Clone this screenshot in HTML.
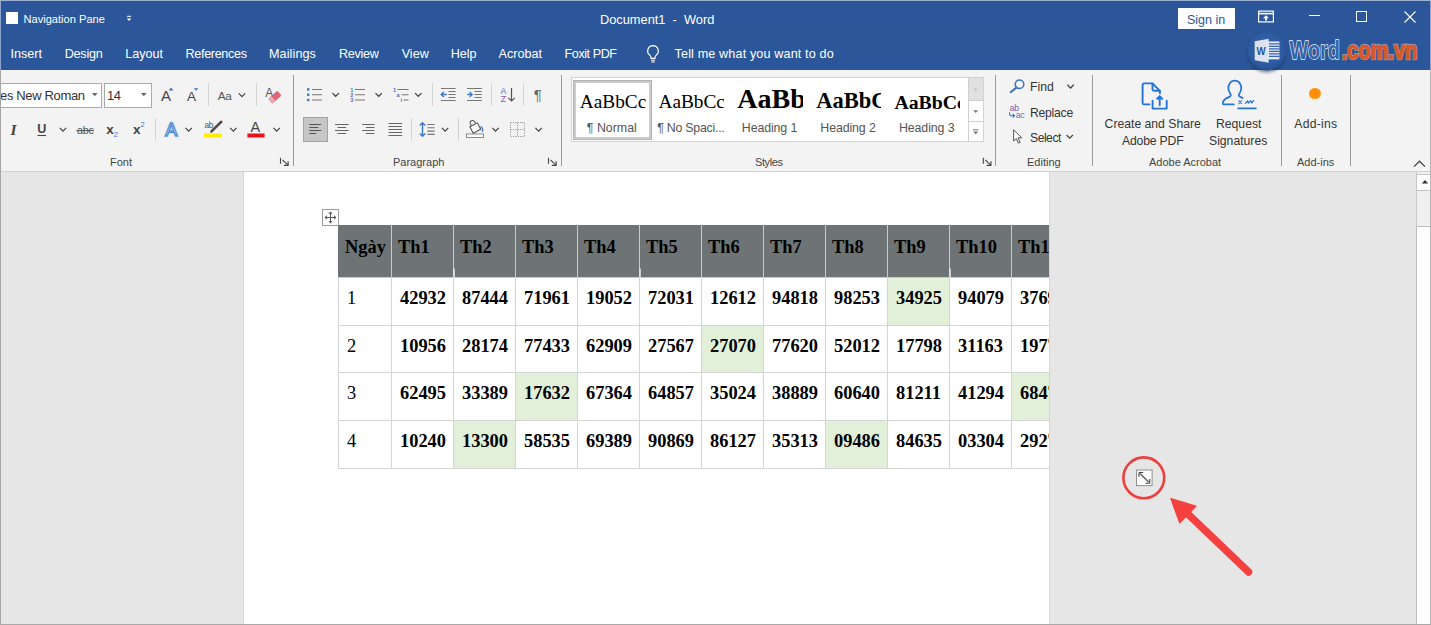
<!DOCTYPE html>
<html lang="vi">
<head>
<meta charset="utf-8">
<title>Document1 - Word</title>
<style>
*{box-sizing:border-box;margin:0;padding:0}
html,body{width:1431px;height:625px;overflow:hidden;background:#e6e6e6}
body{position:relative;font-family:"Liberation Sans",sans-serif;font-size:12px;color:#3b3b3b}
.abs{position:absolute}
.t{position:absolute;white-space:nowrap;line-height:1}
/* title bar */
#titlebar{position:absolute;left:0;top:0;width:1431px;height:70px;background:#2b579a}
#titlebar .t{color:#fff}
#titlebar .tab{top:48px;font-size:12.6px}
/* ribbon */
#ribbon{position:absolute;left:0;top:70px;width:1431px;height:102px;background:#f3f3f3;border-bottom:1px solid #d2d2d2}
.vsep{position:absolute;width:1px;background:#d4d4d4}
.gsep{position:absolute;width:1px;background:#9a9a9a;top:5px;height:91px}
.glabel{position:absolute;white-space:nowrap;line-height:1;font-size:11px;color:#444;top:87px}
.sty{height:30px;line-height:30px;overflow:hidden;white-space:nowrap;font-family:"Liberation Serif",serif;color:#000}
.stn{top:44px;font-size:12.400px;color:#555}
.rb{font-size:12.200px;color:#333}
/* doc */
#doc{position:absolute;left:0;top:172px;width:1431px;height:453px;background:#e6e6e6;overflow:hidden}
#page{position:absolute;left:243px;top:0;width:807px;height:460px;background:#fff;border-left:1px solid #d6d6d6;border-right:1px solid #d6d6d6;overflow:hidden}
/* table */
#tbl{position:absolute;left:94px;top:53px;width:736px;border-collapse:collapse;table-layout:fixed;font-family:"Liberation Serif",serif;font-size:18.4px;color:#000}
#tbl td{border:1px solid #d4d4d4;width:62px;height:48px;padding:0 0 6px 8px;vertical-align:middle;font-weight:bold;white-space:nowrap;overflow:hidden}
#tbl td:first-child{width:53px;font-weight:normal;padding-left:8px}
#tbl tr.h td{background:#6e7475;height:52px;border-color:#c9cbcb;border-top-color:#6e7475;padding:0 0 8px 6px}
#tbl tr.h td:first-child{font-weight:bold;padding-left:6px;border-left-color:#6e7475}
#tbl td.g{background:#e2efd9}
#tbl tr.r2 td{height:47px}
/* frame */
#frame{position:absolute;left:0;top:0;width:1431px;height:625px;pointer-events:none;z-index:50}
#frame i{position:absolute;display:block}
</style>
</head>
<body>
<div id="titlebar">
  <div class="abs" style="left:6px;top:12px;width:12px;height:12px;background:#fff"></div>
  <div class="t" id="navp" style="left:23.5px;top:13.5px;font-size:11.1px">Navigation Pane</div>
  <svg class="abs" style="left:125px;top:14px" width="8" height="9" viewBox="0 0 8 9"><path d="M2 2.300h4.200" stroke="#fff" stroke-width="1" fill="none"/><path d="M1.800 4.400h4.600L4.100 7z" fill="#fff"/></svg>
  <div class="t" id="ttl" style="left:600px;top:14px;font-size:12.8px">Document1&nbsp; -&nbsp; Word</div>
  <!-- tabs -->
  <div class="t tab" id="tb1" style="left:10.4px">Insert</div>
  <div class="t tab" id="tb2" style="left:64.7px;letter-spacing:-0.23px">Design</div>
  <div class="t tab" id="tb3" style="left:125.2px">Layout</div>
  <div class="t tab" id="tb4" style="left:185.6px;letter-spacing:-0.34px">References</div>
  <div class="t tab" id="tb5" style="left:269px;letter-spacing:0.1px">Mailings</div>
  <div class="t tab" id="tb6" style="left:339px;letter-spacing:-0.3px">Review</div>
  <div class="t tab" id="tb7" style="left:401.7px">View</div>
  <div class="t tab" id="tb8" style="left:450.7px">Help</div>
  <div class="t tab" id="tb9" style="left:498.5px">Acrobat</div>
  <div class="t tab" id="tb10" style="left:564.6px;letter-spacing:-0.45px">Foxit PDF</div>
  <svg class="abs" style="left:645px;top:44px" width="16" height="20" viewBox="0 0 16 20"><path d="M8 1.6a5.3 5.3 0 0 0-3.2 9.5c.8.7 1.2 1.5 1.2 2.6v.6h4v-.6c0-1.100.4-1.900 1.200-2.600A5.300 5.300 0 0 0 8 1.600z" fill="none" stroke="#fff" stroke-width="1.2"/><path d="M6 16.2h4M6.300 18h3.400" stroke="#fff" stroke-width="1.1" fill="none"/></svg>
  <div class="t tab" id="tb11" style="left:674.6px;letter-spacing:0.14px">Tell me what you want to do</div>
  <!-- sign in -->
  <div class="abs" style="left:1178px;top:8px;width:57px;height:21px;background:#fff"></div>
  <div class="t" id="sgn" style="left:1187px;top:13.500px;font-size:12.5px;color:#2b579a">Sign in</div>
  <!-- ribbon display options -->
  <svg class="abs" style="left:1258px;top:10px" width="16" height="13" viewBox="0 0 16 13"><rect x="0.6" y="1.1" width="14.800" height="10.800" fill="none" stroke="#fff" stroke-width="1.2"/><path d="M0.6 3.6h14.800" stroke="#fff" stroke-width="1.6"/><path d="M8 5.300l3 3h-2v2.200h-2v-2.200h-2z" fill="#fff"/></svg>
  <!-- min / max / close -->
  <div class="abs" style="left:1309px;top:15px;width:11px;height:1px;background:#fff"></div>
  <div class="abs" style="left:1356px;top:11px;width:11px;height:11px;border:1px solid #fff"></div>
  <svg class="abs" style="left:1404px;top:11px" width="12" height="12" viewBox="0 0 12 12"><path d="M0.5 0.5l11 11M11.500 0.500l-11 11" stroke="#fff" stroke-width="1.100" fill="none"/></svg>
</div>
<div id="ribbon">
  <!-- group separators -->
  <div class="gsep" style="left:293px"></div>
  <div class="gsep" style="left:561px"></div>
  <div class="gsep" style="left:995px"></div>
  <div class="gsep" style="left:1092px"></div>
  <div class="gsep" style="left:1281px"></div>
  <div class="gsep" style="left:1350px"></div>
  <!-- small separators -->
  <div class="vsep" style="left:208px;top:13px;height:23px"></div>
  <div class="vsep" style="left:256px;top:13px;height:23px"></div>
  <div class="vsep" style="left:155px;top:48px;height:23px"></div>
  <div class="vsep" style="left:432px;top:13px;height:23px"></div>
  <div class="vsep" style="left:491px;top:13px;height:23px"></div>
  <div class="vsep" style="left:523px;top:13px;height:23px"></div>
  <div class="vsep" style="left:411px;top:48px;height:23px"></div>
  <div class="vsep" style="left:458px;top:48px;height:23px"></div>
  <!-- combo boxes -->
  <div class="abs" style="left:-6px;top:13px;width:108px;height:25px;background:#fff;border:1px solid #ababab"></div>
  <div class="t" id="fname" style="left:0px;top:19px;font-size:13px;color:#333;letter-spacing:-0.35px">es New Roman</div>
  <div class="abs" style="left:104px;top:13px;width:48px;height:25px;background:#fff;border:1px solid #ababab"></div>
  <div class="t" id="fsize" style="left:107px;top:19px;font-size:13px;color:#333;letter-spacing:-0.6px">14</div>
  <!-- group labels -->
  <div class="glabel" id="gl1" style="left:110px">Font</div>
  <div class="glabel" id="gl2" style="left:393px">Paragraph</div>
  <div class="glabel" id="gl3" style="left:755px;letter-spacing:-0.400px">Styles</div>
  <div class="glabel" id="gl4" style="left:1027px">Editing</div>
  <div class="glabel" id="gl5" style="left:1149px">Adobe Acrobat</div>
  <div class="glabel" id="gl6" style="left:1297px">Add-ins</div>
  <!-- styles gallery -->
  <div class="abs" style="left:571px;top:7px;width:413px;height:65px;background:#fff;border:1px solid #d3d3d3;overflow:hidden">
    <div class="abs" style="left:1px;top:2px;width:79px;height:60px;border:1px solid #b2b2b2"></div>
    <div class="abs" style="left:2px;top:3px;width:77px;height:58px;border:2.500px solid #cbcbcb"></div>
    <div class="abs sty" id="st1" style="left:7.800px;width:66.100px;font-size:19.300px;top:9px">AaBbCcD</div>
    <div class="abs sty" id="st2" style="left:86.500px;width:65.400px;font-size:19.300px;top:9px">AaBbCcD</div>
    <div class="abs sty" id="st3" style="left:165.300px;width:65.400px;font-size:28px;font-weight:bold;top:6px">AaBbC</div>
    <div class="abs sty" id="st4" style="left:244.300px;width:64.500px;font-size:22.500px;font-weight:bold;top:7.900px">AaBbCc</div>
    <div class="abs sty" id="st5" style="left:322.400px;width:65.400px;font-size:19.800px;font-weight:bold;top:8.800px">AaBbCcD</div>
    <div class="t stn" id="sn1" style="left:14.800px">¶ Normal</div>
    <div class="t stn" id="sn2" style="left:85.200px;letter-spacing:-0.260px">¶ No Spaci...</div>
    <div class="t stn" id="sn3" style="left:169.800px;letter-spacing:-0.120px">Heading 1</div>
    <div class="t stn" id="sn4" style="left:248.300px;letter-spacing:-0.120px">Heading 2</div>
    <div class="t stn" id="sn5" style="left:327px;letter-spacing:-0.120px">Heading 3</div>
    <!-- gallery scroll buttons -->
    <div class="abs" style="left:396px;top:-1px;width:16px;height:24px;background:#e1e1e1;border:1px solid #d0d0d0"></div>
    <div class="abs" style="left:396px;top:22px;width:16px;height:22px;background:#fff;border:1px solid #d0d0d0"></div>
    <div class="abs" style="left:396px;top:43px;width:16px;height:22px;background:#fff;border:1px solid #d0d0d0"></div>
  </div>
  <!-- editing -->
  <div class="t rb" id="ed1" style="left:1030px;top:11.300px">Find</div>
  <div class="t rb" id="ed2" style="left:1030px;top:36.800px;letter-spacing:-0.250px">Replace</div>
  <div class="t rb" id="ed3" style="left:1030px;top:61.700px;letter-spacing:-0.500px">Select</div>
  <!-- adobe acrobat -->
  <div class="t rb" id="ad1" style="left:1104.600px;top:48px">Create and Share</div>
  <div class="t rb" id="ad2" style="left:1122px;top:65px;letter-spacing:-0.170px">Adobe PDF</div>
  <div class="t rb" id="ad3" style="left:1216px;top:48px">Request</div>
  <div class="t rb" id="ad4" style="left:1209px;top:65px">Signatures</div>
  <!-- add-ins -->
  <div class="abs" style="left:1309px;top:17.500px;width:11.500px;height:11.500px;border-radius:50%;background:radial-gradient(circle,#ff8a00 0,#ff8f0a 55%,#ffb347 100%)"></div>
  <div class="t rb" id="ai1" style="left:1294.300px;top:48px;letter-spacing:0.260px">Add-ins</div>
  <!-- icon layer : coordinates are page pixels -->
  <svg class="abs" style="left:0;top:0" width="1431" height="101" viewBox="0 70 1431 101" font-family="Liberation Sans, sans-serif">
    <defs>
      <path id="chev" d="M-3.2 -1.6L0 1.6L3.2 -1.6" fill="none" stroke="#444" stroke-width="1.25"/>
      <path id="tri" d="M-2.8 -1.5h5.6L0 1.700z" fill="#666"/>
      <g id="dlg"><path d="M-4 -4.200v6" stroke="#444" stroke-width="1.100" fill="none"/><path d="M-2 -2.200L3.400 3.200" stroke="#444" stroke-width="1.100" fill="none"/><path d="M3.600 -0.800V3.400H-0.600" stroke="#444" stroke-width="1.200" fill="none"/></g>
    </defs>
    <!-- combo arrows -->
    <use href="#tri" x="94.800" y="94.500"/><use href="#tri" x="143.800" y="94.500"/>
    <!-- grow / shrink font -->
    <text x="161" y="101" font-size="15" fill="#444">A</text>
    <path d="M168.600 90.600L171 87.600L173.400 90.600z" fill="#3b78c4"/>
    <text x="187" y="101" font-size="13.500" fill="#444">A</text>
    <path d="M193.800 88.200h4.600L196.100 90.800z" fill="#3b78c4"/>
    <!-- change case -->
    <text x="217.800" y="99.600" font-size="11.800" fill="#555" letter-spacing="-0.400">Aa</text>
    <use href="#chev" x="242" y="95"/>
    <!-- clear formatting -->
    <text x="265.300" y="97" font-size="12" fill="#555">A</text>
    <g transform="rotate(-42 274.800 97.200)"><rect x="268.600" y="94" width="12.400" height="6.400" rx="1.200" fill="#e0677a"/><rect x="268.600" y="94" width="4.200" height="6.400" rx="1.200" fill="#f0a9b3"/></g>
    <!-- italic, underline -->
    <text x="10.500" y="134.500" font-size="15.500" font-family="Liberation Serif, serif" font-style="italic" font-weight="bold" fill="#444">I</text>
    <text x="37.300" y="133.200" font-size="12.600" font-weight="bold" fill="#444">U</text>
    <path d="M37.500 135.500h8.600" stroke="#444" stroke-width="1.100"/>
    <use href="#chev" x="63" y="129.500"/>
    <!-- strikethrough -->
    <text x="77" y="134" font-size="10.800" fill="#555" letter-spacing="-0.300">abc</text>
    <path d="M76.300 130.600h17.600" stroke="#555" stroke-width="1"/>
    <!-- sub / superscript -->
    <text x="106.300" y="134.200" font-size="13.500" font-weight="bold" fill="#444">x</text>
    <text x="113.800" y="136.800" font-size="7.500" fill="#3b78c4">2</text>
    <text x="133" y="134.200" font-size="13.500" font-weight="bold" fill="#444">x</text>
    <text x="140.600" y="127.400" font-size="7.500" fill="#3b78c4">2</text>
    <!-- text effects -->
    <text x="165.300" y="135.800" font-size="18" fill="#fff" stroke="#b9d3f2" stroke-width="2.400">A</text>
    <text x="165.300" y="135.800" font-size="18" fill="#fff" stroke="#3f7fce" stroke-width="1">A</text>
    <use href="#chev" x="188.700" y="129.500"/>
    <!-- highlight -->
    <text x="204.500" y="127.600" font-size="8.400" fill="#555" letter-spacing="-0.300">ab</text>
    <path d="M221.300 121.800L211.600 131.300" stroke="#505050" stroke-width="2.600" stroke-linecap="round"/>
    <path d="M210.200 132.700l1-2.800l1.800 1.800z" fill="#505050"/>
    <rect x="203.800" y="133.500" width="17.800" height="4" fill="#ffee00"/>
    <use href="#chev" x="233.300" y="129.500"/>
    <!-- font colour -->
    <text x="250.600" y="132.300" font-size="14.500" fill="#444">A</text>
    <rect x="247.400" y="133.500" width="17.200" height="4" fill="#e8111f"/>
    <use href="#chev" x="276.700" y="129.500"/>
    <use href="#dlg" x="284.500" y="162"/>
    <!-- bullets -->
    <g fill="#3b78c4"><rect x="307" y="88.200" width="2.400" height="2.400"/><rect x="307" y="93.500" width="2.400" height="2.400"/><rect x="307" y="98.800" width="2.400" height="2.400"/></g>
    <path d="M312 89.500h10M312 94.700h10M312 100h10" stroke="#777" stroke-width="1.100"/>
    <use href="#chev" x="335.700" y="94.700"/>
    <!-- numbering -->
    <g font-size="5.600" font-weight="bold" fill="#3b78c4"><text x="350.200" y="91.500">1</text><text x="350.200" y="96.800">2</text><text x="350.200" y="102.100">3</text></g>
    <path d="M355 89.500h10M355 94.700h10M355 100h10" stroke="#777" stroke-width="1.100"/>
    <use href="#chev" x="378.700" y="94.700"/>
    <!-- multilevel -->
    <g font-size="5.600" font-weight="bold" fill="#3b78c4"><text x="393" y="91.500">1</text><text x="396.600" y="96.800">a</text><text x="400.400" y="102.100">i</text></g>
    <path d="M397.500 89.500h11M401.500 94.700h7M403.500 100h5" stroke="#777" stroke-width="1.100"/>
    <use href="#chev" x="418.300" y="94.700"/>
    <!-- decrease indent -->
    <path d="M441 88.500h14.600M448.500 91.500h7.100M448.500 94.500h7.100M448.500 97.500h7.100M441 100.500h14.600" stroke="#777" stroke-width="1.100"/>
    <path d="M446.800 94.500h-5M443.800 92l-2.600 2.500l2.600 2.500" stroke="#3b78c4" stroke-width="1.300" fill="none"/>
    <!-- increase indent -->
    <path d="M467 88.500h14.800M474.500 91.500h7.300M474.500 94.500h7.300M474.500 97.500h7.300M467 100.500h14.800" stroke="#777" stroke-width="1.100"/>
    <path d="M467.200 94.500h5M469.600 92l2.600 2.500l-2.600 2.500" stroke="#3b78c4" stroke-width="1.300" fill="none"/>
    <!-- sort -->
    <text x="500.600" y="94.400" font-size="8.600" fill="#3b78c4">A</text>
    <text x="500.800" y="102" font-size="8.600" fill="#9b4fb0">Z</text>
    <path d="M511.500 88v12.500M508.300 97.800l3.200 3.200l3.200-3.200" stroke="#555" stroke-width="1.200" fill="none"/>
    <!-- pilcrow -->
    <text x="533.800" y="100.200" font-size="15" fill="#666">¶</text>
    <!-- align left (selected) -->
    <rect x="303.500" y="117.500" width="24" height="24" fill="#c6c6c6" stroke="#a3a3a3" stroke-width="1"/>
    <path d="M309.300 124.500h12M309.300 127.500h9M309.300 130.500h12M309.300 133.500h7" stroke="#555" stroke-width="1.100"/>
    <!-- center -->
    <path d="M335 124.500h13.600M337.500 127.500h8.600M335 130.500h13.600M337.500 133.500h8.600" stroke="#666" stroke-width="1.100"/>
    <!-- right -->
    <path d="M362.300 124.500h12.200M366 127.500h8.500M362.300 130.500h12.200M366 133.500h8.500" stroke="#666" stroke-width="1.100"/>
    <!-- justify -->
    <path d="M388.500 123.500h13.600M388.500 126.500h13.600M388.500 129.500h13.600M388.500 132.500h13.600M388.500 135.500h13.600" stroke="#666" stroke-width="1.100"/>
    <!-- line spacing -->
    <path d="M422.500 123v13M419.800 125.600l2.700-2.800l2.700 2.800M419.800 133.400l2.700 2.800l2.700-2.800" stroke="#3b78c4" stroke-width="1.400" fill="none"/>
    <path d="M427.300 124.500h7.400M427.300 127.800h7.400M427.300 131.100h7.400M427.300 134.400h7.400" stroke="#777" stroke-width="1.100"/>
    <use href="#chev" x="445.100" y="129.500"/>
    <!-- shading -->
    <rect x="466.500" y="134" width="17" height="3.500" fill="#fff" stroke="#8a8a8a" stroke-width="1"/>
    <g transform="rotate(-28 475 127.500)"><path d="M470.800 124.500h8.400v7.200h-8.400z" fill="#fff" stroke="#555" stroke-width="1.100"/><path d="M472.600 124.500v-2.200a2.400 2.400 0 0 1 4.800 0v2.200" fill="none" stroke="#555" stroke-width="1"/></g>
    <path d="M480.500 126.500c1.800 1 2.600 3 1.800 5.300" fill="none" stroke="#3b78c4" stroke-width="1.300"/>
    <use href="#chev" x="495.500" y="129.500"/>
    <!-- borders -->
    <path d="M510.500 122.500h14v14h-14zM517.500 122.500v14M510.500 129.500h14" fill="none" stroke="#9a9a9a" stroke-width="1" stroke-dasharray="1.200 1.200"/>
    <use href="#chev" x="538.600" y="129.500"/>
    <use href="#dlg" x="552.500" y="162"/>
    <!-- gallery arrows + launcher -->
    <path d="M973.400 90.600h4.600L975.700 88z" fill="#c2c2c2"/>
    <path d="M973.200 110.200h5L975.700 113z" fill="#777"/>
    <path d="M973 129.800h5.400" stroke="#777" stroke-width="1"/><path d="M973.200 131.600h5L975.700 134.400z" fill="#777"/>
    <use href="#dlg" x="987.300" y="162"/>
    <!-- find -->
    <circle cx="1019.500" cy="84.300" r="4.300" fill="none" stroke="#3a74c0" stroke-width="1.500"/>
    <path d="M1016.300 87.600L1010.600 92.200" stroke="#3a74c0" stroke-width="2" stroke-linecap="round"/>
    <use href="#chev" x="1070.600" y="86.400"/>
    <!-- replace -->
    <text x="1009.800" y="110.600" font-size="8.600" fill="#7a5aa6" letter-spacing="-0.300">ab</text>
    <text x="1015.800" y="118" font-size="8.600" fill="#4a7fc8" letter-spacing="-0.300">ac</text>
    <path d="M1009.600 112.200v2.400q0 1.200 1.200 1.200h3.400M1012.600 113.900l1.900 1.900l-1.900 1.900" fill="none" stroke="#3a74c0" stroke-width="1.100"/>
    <!-- select -->
    <path d="M1013.600 129.800v11.200l2.700-2.500l2.100 4.600l1.700-.800l-2.100-4.500h3.700z" fill="#fff" stroke="#555" stroke-width="1" stroke-linejoin="round"/>
    <use href="#chev" x="1069.700" y="136.600"/>
    <!-- create and share adobe pdf -->
    <g fill="none" stroke="#2373d9" stroke-width="1.900" stroke-linejoin="round" stroke-linecap="round">
      <path d="M1149.400 104.400h-5.300q-1.500 0-1.500-1.500v-18q0-1.500 1.500-1.500h8.400l7.400 7.400v2.400"/>
      <path d="M1152.500 83.600v5.700q0 1.500 1.500 1.500h5.700"/>
      <path d="M1152.600 100.800v7.800h14.100v-7.800"/>
      <path d="M1159.700 105.300v-8"/><path d="M1156.600 99l3.100-3.400l3.100 3.400z" fill="#2373d9" stroke-width="1.200"/>
    </g>
    <!-- request signatures -->
    <g fill="none" stroke="#2373d9" stroke-width="1.700" stroke-linecap="round" stroke-linejoin="round">
      <path d="M1233.800 104.400h-9.600q-1.800 0-1.300-1.900c.700-2.600 3-4.300 6-5.400c2.200-.800 2.300-2.300 1.300-3.700c-2.200-3.100-2.400-7 -.400-10.200c2.200-3.500 7.800-3.500 10 0c2 3.200 1.800 7.100 -.400 10.200c-1 1.400 -.900 2.900 1.300 3.700q1.100.400 2 .900"/>
      <path d="M1238.200 108.400h17.600" stroke-width="1.800"/>
      <path d="M1238.800 100.800l2.800 2.800M1241.600 100.800l-2.800 2.800" stroke-width="1.200"/>
      <path d="M1245.300 103.400l2.300-2.600l.800 2.400l2.300-2.600l.800 2.400l2.300-2.600" stroke-width="1.200"/>
    </g>
    <!-- collapse ribbon -->
    <path d="M1414 166.600l5.500-5.400l5.500 5.400" fill="none" stroke="#444" stroke-width="1.300"/>
  </svg>
</div>
<div id="doc">
  <!-- scrollbar -->
  <div class="abs" style="left:1416px;top:0;width:15px;height:453px;background:#f0f0f0;border-left:1px solid #c9c9c9"></div>
  <div class="abs" style="left:1416px;top:2px;width:15px;height:17px;background:#fff;border:1px solid #c4c4c4"></div>
  <div class="abs" style="left:1416px;top:54px;width:15px;height:400px;background:#fff;border:1px solid #bdbdbd"></div>
  <svg class="abs" style="left:0;top:0;z-index:3" width="1431" height="453" viewBox="0 172 1431 453">
    <path d="M1421.800 183.400h6.400L1425 180z" fill="#333"/>
    <!-- table move handle -->
    <rect x="322.500" y="209.500" width="16" height="16" fill="#fff" stroke="#9c9c9c" stroke-width="1"/>
    <path d="M325.500 217.500h10M330.500 212.500v10" stroke="#555" stroke-width="1"/>
    <path d="M324.600 217.500l2.200-2.200v4.400zM336.400 217.500l-2.200-2.200v4.400zM330.500 211.600l-2.200 2.200h4.400zM330.500 223.400l-2.200-2.200h4.400z" fill="#555"/>
    <path d="M454 268.500v9M640 268.500v9M950 268.500v9" stroke="#e4e6e6" stroke-width="1.600"/>
    <!-- table resize handle -->
    <rect x="1136.500" y="470" width="15.600" height="15.600" fill="#fdfdfd" stroke="#8f8f8f" stroke-width="1"/>
    <path d="M1140 473.500L1148.600 482" stroke="#6a6a6a" stroke-width="1.700"/>
    <path d="M1139 472.500h4.200M1139 472.500v4.200M1149.700 483.200h-4.200M1149.700 483.200v-4.200" stroke="#444" stroke-width="1.100" fill="none"/>
    <!-- red annotation -->
    <circle cx="1143.800" cy="477.800" r="20.400" fill="none" stroke="#ee3f3c" stroke-width="2.600"/>
    <path d="M1248.600 572L1189 515" stroke="#f4413f" stroke-width="7.400" stroke-linecap="round"/>
    <path d="M1171 498.600L1195.800 506.200L1179.700 522.600z" fill="#f4413f" stroke="#f4413f" stroke-width="1.500" stroke-linejoin="round"/>
  </svg>
  <div id="page">
    <table id="tbl">
      <colgroup><col style="width:53px"><col style="width:62px"><col style="width:62px"><col style="width:62px"><col style="width:62px"><col style="width:62px"><col style="width:62px"><col style="width:62px"><col style="width:62px"><col style="width:62px"><col style="width:62px"><col style="width:62px"></colgroup>
      <tr class="h"><td>Ngày</td><td>Th1</td><td>Th2</td><td>Th3</td><td>Th4</td><td>Th5</td><td>Th6</td><td>Th7</td><td>Th8</td><td>Th9</td><td>Th10</td><td>Th11</td></tr>
      <tr><td>1</td><td>42932</td><td>87444</td><td>71961</td><td>19052</td><td>72031</td><td>12612</td><td>94818</td><td>98253</td><td class="g">34925</td><td>94079</td><td>37695</td></tr>
      <tr class="r2"><td>2</td><td>10956</td><td>28174</td><td>77433</td><td>62909</td><td>27567</td><td class="g">27070</td><td>77620</td><td>52012</td><td>17798</td><td>31163</td><td>19773</td></tr>
      <tr><td>3</td><td>62495</td><td>33389</td><td class="g">17632</td><td>67364</td><td>64857</td><td>35024</td><td>38889</td><td>60640</td><td>81211</td><td>41294</td><td class="g">68475</td></tr>
      <tr><td>4</td><td>10240</td><td class="g">13300</td><td>58535</td><td>69389</td><td>90869</td><td>86127</td><td>35313</td><td class="g">09486</td><td>84635</td><td>03304</td><td>29271</td></tr>
    </table>
  </div>
</div>
<!-- watermark logo -->
<svg class="abs" style="left:1236px;top:26px;z-index:5" width="195" height="52" viewBox="1236 26 195 52" font-family="Liberation Sans, sans-serif">
  <defs>
    <radialGradient id="lgc" cx="0.5" cy="0.4" r="0.6"><stop offset="0" stop-color="#3362ab"/><stop offset="0.8" stop-color="#2c5aa0"/><stop offset="1" stop-color="#26508f"/></radialGradient>
    <filter id="lgs" x="-30%" y="-30%" width="160%" height="170%"><feGaussianBlur stdDeviation="1.600"/></filter>
  </defs>
  <ellipse cx="1266.700" cy="54" rx="19" ry="18.500" fill="#142c55" opacity="0.550" filter="url(#lgs)"/>
  <circle cx="1266.700" cy="51.500" r="19" fill="url(#lgc)"/>
  <rect x="1267.500" y="41.400" width="11.900" height="18" fill="#e3e9f4"/>
  <path d="M1269 43.900h10.400M1269 46.400h10.400M1269 48.900h10.400M1269 51.400h10.400M1269 53.900h10.400M1269 56.400h10.400" stroke="#3a66ad" stroke-width="1.200"/>
  <path d="M1254.700 41.200L1268.700 38.700V62.700L1254.700 60.200z" fill="#dbe3f1"/>
  <text x="1256.400" y="54.600" font-size="10.500" font-weight="bold" fill="#2b579a" transform="translate(1256.400 0) scale(0.920 1) translate(-1256.400 0)">W</text>
  <g font-weight="bold">
    <text transform="translate(1290.200 60.400) scale(0.778 1)" font-size="25.500" fill="#1a3768" opacity="0.700">Word</text>
    <text transform="translate(1289.600 59.200) scale(0.778 1)" font-size="25.500" fill="#3565ad" stroke="#f4f7fc" stroke-width="1.400" paint-order="stroke" stroke-linejoin="round">Word</text>
    <text transform="translate(1342.600 60.400) scale(0.780 1)" font-size="25.700" fill="#5c2410" stroke="#5c2410" stroke-width="0.900" opacity="0.550">.com.vn</text>
    <text transform="translate(1341.800 59.300) scale(0.780 1)" font-size="25.700" fill="#d9572b" stroke="#f3e6e0" stroke-opacity="0.550" stroke-width="2.400" paint-order="stroke">.com.vn</text><text transform="translate(1341.800 59.300) scale(0.780 1)" font-size="25.700" fill="#d9572b" stroke="#d9572b" stroke-width="0.900">.com.vn</text>
  </g>
</svg>
<div id="frame">
  <i style="left:0;top:0;width:1431px;height:1px;background:#9fb1d3"></i>
  <i style="left:0;top:1px;width:1px;height:69px;background:#90a5cd"></i>
  <i style="left:1430px;top:1px;width:1px;height:69px;background:#8fa3ca"></i>
  <i style="left:0;top:70px;width:1px;height:555px;background:#a6a6a6"></i>
  <i style="left:1430px;top:70px;width:1px;height:555px;background:#b4b4b4"></i>
  <i style="left:0;top:624px;width:1431px;height:1px;background:#a9a9a9"></i>
</div>
</body>
</html>
